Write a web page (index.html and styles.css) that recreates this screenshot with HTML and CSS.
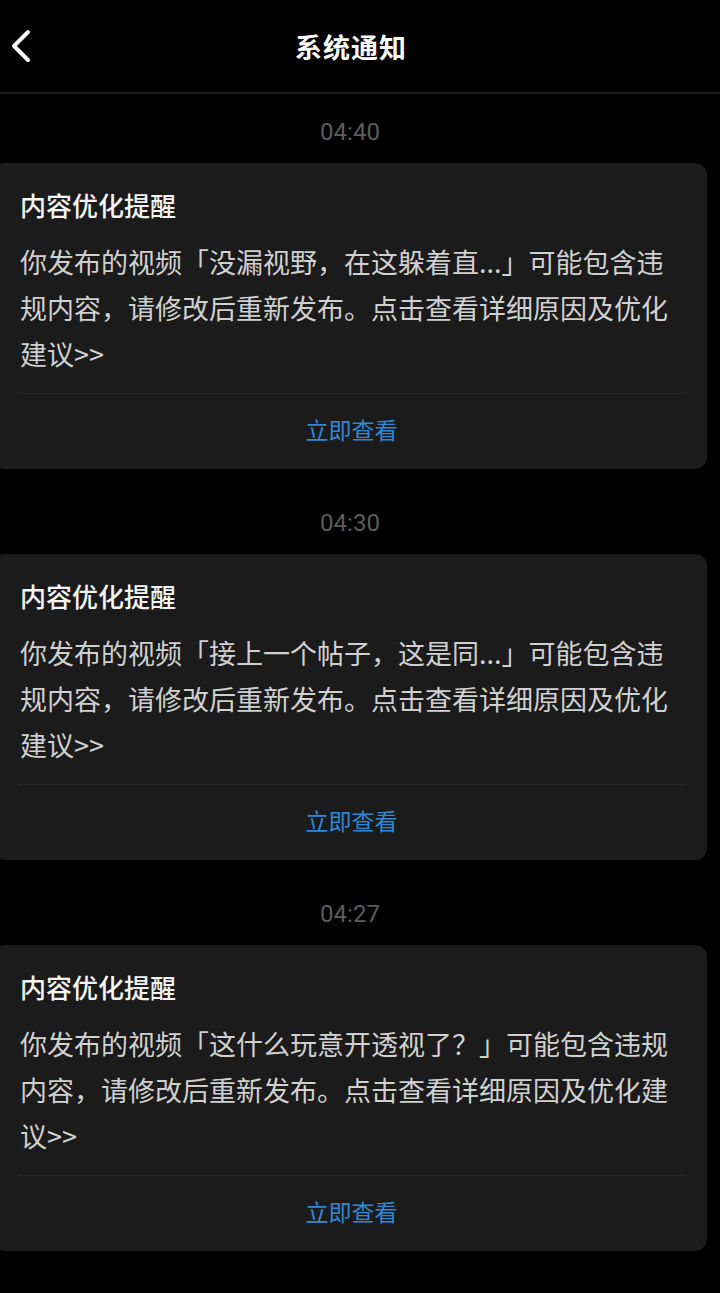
FILE: index.html
```html
<!DOCTYPE html>
<html lang="zh-CN">
<head>
    <meta charset="UTF-8">
    <meta name="viewport" content="width=device-width, initial-scale=1.0">
    <title>系统通知</title>
    <link rel="stylesheet" href="styles.css">
</head>
<body>
    <div class="header">
        <a class="back" href="#">
            <svg width="24" height="36" viewBox="0 0 24 36">
                <path d="M18 4 L4 18 L18 32" fill="none" stroke="#fff" stroke-width="4" stroke-linecap="round" stroke-linejoin="round"/>
            </svg>
        </a>
        <h1>系统通知</h1>
    </div>

    <div class="list">
        <div class="time">04:40</div>
        <div class="card">
            <div class="card-title">内容优化提醒</div>
            <p class="card-text">你发布的视频「没漏视野，在这躲着直...」可能包含违规内容，请修改后重新发布。点击查看详细原因及优化建议&gt;&gt;</p>
            <div class="card-action">立即查看</div>
        </div>

        <div class="time">04:30</div>
        <div class="card">
            <div class="card-title">内容优化提醒</div>
            <p class="card-text">你发布的视频「接上一个帖子，这是同...」可能包含违规内容，请修改后重新发布。点击查看详细原因及优化建议&gt;&gt;</p>
            <div class="card-action">立即查看</div>
        </div>

        <div class="time">04:27</div>
        <div class="card">
            <div class="card-title">内容优化提醒</div>
            <p class="card-text">你发布的视频「这什么玩意开透视了？」可能包含违规内容，请修改后重新发布。点击查看详细原因及优化建议&gt;&gt;</p>
            <div class="card-action">立即查看</div>
        </div>
    </div>
</body>
</html>
```

FILE: styles.css
```css
body {
    margin: 0;
    background: #000;
    color: #fff;
    font-family: "Noto Sans CJK SC", "Noto Sans", sans-serif;
}
.header {
    height: 92px;
    border-bottom: 2px solid #1c1c1c;
    display: flex;
    align-items: center;
    justify-content: center;
    padding-right: 18px;
    position: relative;
}
.header h1 {
    margin: 0;
    font-size: 27px;
    font-weight: 700;
    letter-spacing: 1px;
}
.back {
    position: absolute;
    left: 10px;
    top: 28px;
    display: flex;
}
.list {
    width: 714px;
    margin-left: -7px;
}
.time {
    height: 69px;
    box-sizing: border-box;
    padding-top: 25px;
    line-height: 26px;
    text-align: center;
    font-family: Roboto, "Noto Sans", sans-serif;
    font-size: 24px;
    color: #5c5c5c;
}
.card {
    background: #1b1b1b;
    border-radius: 12px;
    margin-bottom: 16px;
    padding: 24px 22px 0 25px;
}
.card-title {
    font-size: 26px;
    font-weight: 500;
    line-height: 36px;
    color: #f5f5f5;
    padding-left: 2px;
}
.card-text {
    margin: 16px 0 16px;
    padding-left: 2px;
    font-size: 27px;
    line-height: 46px;
    color: #d0d0d0;
}
.card-action {
    border-top: 1px solid #262626;
    height: 75px;
    line-height: 70px;
    text-align: center;
    font-size: 23px;
    color: #3088d4;
}
```
